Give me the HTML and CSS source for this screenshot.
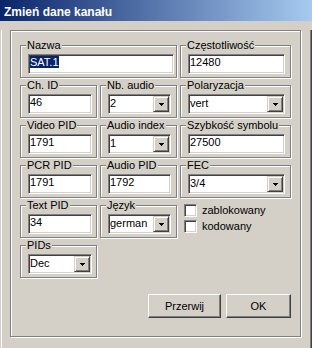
FILE: index.html
```html
<!DOCTYPE html>
<html lang="pl">
<head>
    <meta charset="UTF-8">
    <title>Zmień dane kanału</title>
    <link rel="stylesheet" href="styles.css">
</head>
<body>
    <div class="window">
        <div class="titlebar">Zmień dane kanału</div>
        <div class="frame">
            <div class="panel">
                <div class="grid">
                    <fieldset class="group span2">
                        <legend>Nazwa</legend>
                        <div class="edit w-name"><span class="sel">SAT.1</span></div>
                    </fieldset>
                    <fieldset class="group">
                        <legend>Częstotliwość</legend>
                        <div class="edit w-wide">12480</div>
                    </fieldset>

                    <fieldset class="group">
                        <legend>Ch. ID</legend>
                        <div class="edit w-small">46</div>
                    </fieldset>
                    <fieldset class="group">
                        <legend>Nb. audio</legend>
                        <div class="combo w-mid"><span class="val">2</span><span class="drop"><svg width="5" height="3"><path d="M0 0h5v1h-1v1h-1v1h-1v-1h-1v-1h-1z"/></svg></span></div>
                    </fieldset>
                    <fieldset class="group">
                        <legend>Polaryzacja</legend>
                        <div class="combo w-wide"><span class="val">vert</span><span class="drop"><svg width="5" height="3"><path d="M0 0h5v1h-1v1h-1v1h-1v-1h-1v-1h-1z"/></svg></span></div>
                    </fieldset>

                    <fieldset class="group">
                        <legend>Video PID</legend>
                        <div class="edit w-small">1791</div>
                    </fieldset>
                    <fieldset class="group">
                        <legend>Audio index</legend>
                        <div class="combo w-mid"><span class="val">1</span><span class="drop"><svg width="5" height="3"><path d="M0 0h5v1h-1v1h-1v1h-1v-1h-1v-1h-1z"/></svg></span></div>
                    </fieldset>
                    <fieldset class="group">
                        <legend>Szybkość symbolu</legend>
                        <div class="edit w-wide">27500</div>
                    </fieldset>

                    <fieldset class="group">
                        <legend>PCR PID</legend>
                        <div class="edit w-small">1791</div>
                    </fieldset>
                    <fieldset class="group">
                        <legend>Audio PID</legend>
                        <div class="edit w-mid">1792</div>
                    </fieldset>
                    <fieldset class="group">
                        <legend>FEC</legend>
                        <div class="combo w-wide"><span class="val">3/4</span><span class="drop"><svg width="5" height="3"><path d="M0 0h5v1h-1v1h-1v1h-1v-1h-1v-1h-1z"/></svg></span></div>
                    </fieldset>

                    <fieldset class="group">
                        <legend>Text PID</legend>
                        <div class="edit w-small">34</div>
                    </fieldset>
                    <fieldset class="group">
                        <legend>Język</legend>
                        <div class="combo w-mid"><span class="val">german</span><span class="drop"><svg width="5" height="3"><path d="M0 0h5v1h-1v1h-1v1h-1v-1h-1v-1h-1z"/></svg></span></div>
                    </fieldset>
                    <div class="checks">
                        <label class="check"><span class="box"></span>zablokowany</label>
                        <label class="check"><span class="box"></span>kodowany</label>
                    </div>

                    <fieldset class="group">
                        <legend>PIDs</legend>
                        <div class="combo w-small"><span class="val">Dec</span><span class="drop"><svg width="5" height="3"><path d="M0 0h5v1h-1v1h-1v1h-1v-1h-1v-1h-1z"/></svg></span></div>
                    </fieldset>
                </div>

                <div class="buttons">
                    <button class="btn btn-cancel">Przerwij</button>
                    <button class="btn btn-ok">OK</button>
                </div>
            </div>
        </div>
    </div>
</body>
</html>
```

FILE: styles.css
```css
body {
    margin: 0;
    padding: 0;
    background-color: #d4d0c8;
    font-family: "Liberation Sans", Arial, sans-serif;
    font-size: 11px;
    color: #000;
}

.window {
    width: 312px;
    height: 348px;
    background-color: #d4d0c8;
}

.titlebar {
    height: 21px;
    box-sizing: border-box;
    padding: 4px 0 0 4px;
    line-height: 17px;
    font-size: 12px;
    font-weight: bold;
    color: #fff;
    background: linear-gradient(to right, #0a246a, #a6caf0);
}

/* window edge below the title */
.frame {
    height: 327px;
    box-sizing: border-box;
    border-left: 1px solid #d4d0c8;
    border-right: 1px solid #404040;
    border-bottom: 1px solid #404040;
    box-shadow: inset 1px 0 0 #fff, inset -1px -1px 0 #808080;
}

.panel {
    width: 291px;
    height: 307px;
    box-sizing: border-box;
    margin: 9px 0 0 9px;
    padding: 8px 9px 18px 9px;
    border: 1px solid #808080;
    box-shadow: 1px 1px 0 #fff, inset 1px 1px 0 #fff;
    display: flex;
    flex-direction: column;
}

.grid {
    display: grid;
    grid-template-columns: 77px 77px 111px;
    column-gap: 3px;
    row-gap: 1px;
    align-items: start;
}

.span2 {
    grid-column: span 2;
}

/* group boxes */
.group {
    margin: 0;
    min-width: 0;
    padding: 2px 4px 3px 7px;
    border: 1px solid #808080;
    box-shadow: 1px 1px 0 #fff, inset 1px 1px 0 #fff;
}

.group legend {
    padding: 0 1px;
    margin-left: -2px;
    line-height: 13px;
    background-color: #d4d0c8;
}

/* sunken fields */
.edit, .combo {
    height: 20px;
    box-sizing: border-box;
    padding: 1px 1px 2px 1px;
    line-height: 13px;
    background-color: #fff;
    border: 1px solid;
    border-color: #808080 #fff #fff #808080;
    box-shadow: inset 1px 1px 0 #404040, inset -1px -1px 0 #d4d0c8;
    white-space: nowrap;
    overflow: hidden;
}

.w-name { width: 146px; }
.w-small { width: 64px; }
.w-mid { width: 63px; }
.w-wide { width: 97px; }

.sel {
    background-color: #0a246a;
    color: #fff;
}

.combo {
    display: flex;
    padding: 1px;
}

.combo .val {
    flex: 1;
    padding-top: 1px;
}

.drop {
    width: 16px;
    height: 16px;
    box-sizing: border-box;
    background-color: #d4d0c8;
    border: 1px solid;
    border-color: #d4d0c8 #404040 #404040 #d4d0c8;
    box-shadow: inset 1px 1px 0 #fff, inset -1px -1px 0 #808080;
    display: flex;
    align-items: center;
    justify-content: center;
}

.drop svg {
    display: block;
    fill: #000;
    shape-rendering: crispEdges;
}

/* checkboxes */
.checks {
    padding: 5px 0 0 4px;
    display: flex;
    flex-direction: column;
    gap: 3px;
}

.check {
    display: flex;
    align-items: center;
    height: 13px;
    line-height: 13px;
}

.box {
    width: 13px;
    height: 13px;
    box-sizing: border-box;
    margin-right: 5px;
    background-color: #fff;
    border: 1px solid;
    border-color: #808080 #fff #fff #808080;
    box-shadow: inset 1px 1px 0 #404040, inset -1px -1px 0 #d4d0c8;
}

/* buttons */
.buttons {
    margin-top: auto;
    display: flex;
    justify-content: flex-end;
    gap: 5px;
}

.btn {
    height: 24px;
    padding: 0;
    font-family: inherit;
    font-size: 11px;
    color: #000;
    background-color: #d4d0c8;
    border: 1px solid;
    border-color: #fff #404040 #404040 #fff;
    box-shadow: inset -1px -1px 0 #808080;
}

.btn-cancel { width: 73px; }
.btn-ok { width: 65px; }
```
